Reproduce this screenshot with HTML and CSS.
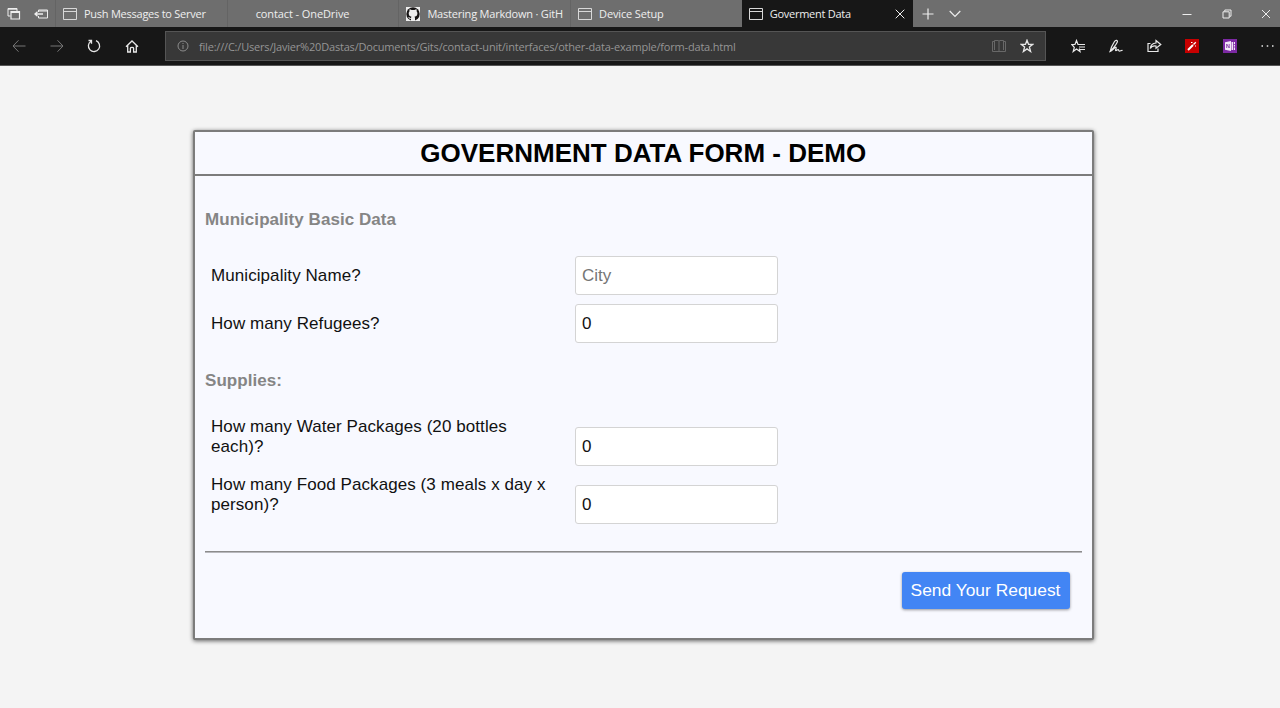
FILE: index.html
```html
<!DOCTYPE html>
<html lang="en">
<head>
<meta charset="utf-8">
<title>Goverment Data</title>
<link rel="stylesheet" href="styles.css">
</head>
<body>
<svg class="defs" width="0" height="0" aria-hidden="true">
  <symbol id="page" viewBox="0 0 14 12"><path d="M.5.5h13v11H.5zM.5 3.5h13" fill="none" stroke="currentColor"/></symbol>
</svg>
<header class="tabs">
  <div class="tab-tools">
    <svg width="14" height="14" viewBox="0 0 14 14" fill="none" stroke="currentColor"><path d="M3.500 9H1V1.500h9V4M1 2.200h9"/><path d="M4 4.500h8.500V12H4zM4 5.500h8.500" stroke-width="1.200"/></svg>
    <svg width="14" height="10" viewBox="0 0 14 10" fill="none" stroke="currentColor"><path d="M4.500 3V1h9v8h-9V7M4.500 2h9"/><path d="M1 5h8M3.500 2.800L1 5l2.500 2.200" stroke-width="1.300"/></svg>
  </div>
  <div class="tab"><svg class="fav" width="14" height="12"><use href="#page"/></svg><span class="t1">Push Messages to Server</span></div>
  <div class="tab plain"><span class="t2">contact - OneDrive</span></div>
  <div class="tab git"><svg class="fav" width="14" height="14" viewBox="0 0 14 14"><path fill="#eee" d="M0 0h14v14H0z"/><circle cx="7" cy="7" r="6.700" fill="#171515"/><path fill="#eee" d="M5 14v-2.200c-2 .4-2-1.200-3-1.400 1.500-.4 1.800 1 3 .5.100-.6.300-.9.500-1.100C3.500 9.500 2.700 8.300 2.700 6.300c0-.8.300-1.500.8-2-.2-.7-.1-1.400.1-2 .8 0 1.500.4 2 .8a7 7 0 0 1 2.900 0c.6-.4 1.200-.8 2-.8.200.6.300 1.300.1 2 .5.500.8 1.200.8 2 0 2-.9 3.200-2.900 3.500.4.400.5.900.5 1.500V14z"/></svg><span class="t3">Mastering Markdown · GitH</span></div>
  <div class="tab"><svg class="fav" width="14" height="12"><use href="#page"/></svg><span class="t4">Device Setup</span></div>
  <div class="tab active"><svg class="fav" width="14" height="12"><use href="#page"/></svg><span class="t5">Goverment Data</span><svg class="close" width="10" height="10" viewBox="0 0 10 10"><path d="M.7.7l8.600 8.600M9.300.7L.7 9.300" stroke="currentColor"/></svg></div>
  <div class="tab-actions">
    <svg width="12" height="12" viewBox="0 0 12 12"><path d="M6 .5v11M.5 6h11" stroke="currentColor" stroke-width="1.200"/></svg>
    <svg width="12" height="8" viewBox="0 0 12 8"><path d="M.7 1L6 6.300 11.300 1" fill="none" stroke="currentColor" stroke-width="1.200"/></svg>
  </div>
  <div class="window-actions">
    <svg width="10" height="10" viewBox="0 0 10 10"><path d="M.5 5.500h9" stroke="currentColor"/></svg>
    <svg width="10" height="10" viewBox="0 0 10 10" fill="none" stroke="currentColor"><path d="M1 2.800h6.200V9H1zM2.800 2.500V1H9v6.200H7.500"/></svg>
    <svg width="10" height="10" viewBox="0 0 10 10"><path d="M1 1l8 8M9 1L1 9" stroke="currentColor"/></svg>
  </div>
</header>
<nav class="toolbar">
  <div class="nav-buttons">
    <svg class="dim" width="14" height="14" viewBox="0 0 14 14"><path d="M13.500 7H1M6.500 1.300L1 7l5.500 5.700"/></svg>
    <svg class="dim" width="14" height="14" viewBox="0 0 14 14"><path d="M.5 7H13M7.500 1.300L13 7l-5.500 5.700"/></svg>
    <svg width="14" height="14" viewBox="0 0 14 14"><path d="M9 1.700A5.600 5.600 0 1 1 4 2.200M1.500 1.500h3V4.700" stroke-width="1.300"/></svg>
    <svg width="14" height="14" viewBox="0 0 14 14"><path d="M1 7.800l6-5.800 6 5.800M2.700 6.500V13h2.700V9.200c0-1 3.200-1 3.200 0V13h2.700V6.500" stroke-width="1.300"/></svg>
  </div>
  <div class="address">
    <svg class="info" width="12" height="12" viewBox="0 0 12 12"><circle cx="6" cy="6" r="5"/><path d="M6 5v4M6 3v1"/></svg>
    <span class="url">file:///C:/Users/Javier%20Dastas/Documents/Gits/contact-unit/interfaces/other-data-example/form-data.html</span>
    <svg class="book" width="14" height="14" viewBox="0 0 14 14"><path d="M.5 2.500h2v-1H6q1 0 1 1 0-1 1-1h3.500v1h2v10H.5zM7 2.500v10M2.500 2v9M11.500 2v9"/></svg>
    <svg class="star" width="14" height="14" viewBox="0 0 14 14"><path d="M7 1.200l1.500 4.100h4.300L9.400 8l1.200 4.500L7 9.900l-3.600 2.600L4.600 8 1.200 5.300h4.300z" stroke-width="1.300"/></svg>
  </div>
  <div class="toolbar-actions">
    <svg width="15" height="14" viewBox="0 0 15 14"><path d="M8.300 9.500L9 12.500 5.500 10 2.200 12.500 3.300 8.300.8 5.500H4L5.500 1.500 7 5.500h7M8 8h6M9 10.500h5" stroke-width="1.200"/></svg>
    <svg width="15" height="14" viewBox="0 0 15 14"><path d="M1.200 12.500L2.500 8 5.500 2.500c1.200-2 3.700-1.300 2.700.8C7 6 3.500 10 1.200 12.500c2-.5 4.700-4.700 5.800-4.300 1 .5-1.300 3.300-.1 3.400 1 0 1.600-1.300 2.300-1 .7.400.2 1.400 1.200 1.500 1.200 0 2-1.200 3.200-.6" stroke-width="1.200"/></svg>
    <svg width="15" height="14" viewBox="0 0 15 14"><path d="M3.500 4.500H1v8h10V9.500M9 1.500L13.800 5.500 9 9.300V7Q5 6.500 3.300 9.500 3.700 4.500 9 4z" stroke-width="1.200"/></svg>
    <svg width="14" height="14" viewBox="0 0 14 14"><path fill="#c70000" stroke="none" d="M0 0h14v14H0z"/><path d="M3 11l5-5" stroke="#fff" stroke-width="1.900"/><path d="M8.500 5.500L10.800 3.200" stroke="#fff" stroke-width="1.300"/><path d="M6 3.500h1.500M10.500 6.500v1" stroke="#fff"/></svg>
    <svg class="note" width="14" height="14" viewBox="0 0 14 14"><path fill="#7c29a3" stroke="none" d="M0 0h14v14H0z"/><path fill="#f2e8f6" stroke="none" d="M2 3.200L8 2v10l-6-1.200zM8.500 3H12v8H8.500z"/><path d="M3.700 9V5l2.500 4V5M10.500 3v8M10.500 5.500H12M10.500 8H12" stroke="#7c29a3" stroke-width=".8"/></svg>
    <svg width="13" height="4" viewBox="0 0 13 4"><path d="M.5 2h1.500M5.750 2h1.500M11 2h1.500" stroke-width="1.500"/></svg>
  </div>
</nav>
<main>
  <form class="panel">
    <h1><span>GOVERNMENT DATA FORM - DEMO</span></h1>
    <div class="content">
      <h2>Municipality Basic Data</h2>
      <div class="row"><label for="city">Municipality Name?</label><input id="city" placeholder="City"></div>
      <div class="row"><label for="refugees">How many Refugees?</label><input id="refugees" value="0"></div>
      <h2 class="supplies">Supplies:</h2>
      <div class="row tall"><label for="water">How many Water Packages (20 bottles each)?</label><input id="water" value="0"></div>
      <div class="row tall"><label for="food">How many Food Packages (3 meals x day x person)?</label><input id="food" value="0"></div>
      <div class="footer"><button type="button">Send Your Request</button></div>
    </div>
  </form>
</main>
</body>
</html>
```
FILE: styles.css
```css
* { box-sizing: border-box; }
body { margin: 0; height: 708px; overflow: hidden; background: #f4f4f4; font-family: "Liberation Sans", Arial, sans-serif; }
svg { display: block; flex: none; }
.defs { position: absolute; }
.tabs, .toolbar { display: flex; font-family: "Open Sans", "Noto Sans", sans-serif; font-size: 11px; color: #eee; white-space: nowrap; }
.tabs { height: 27px; background: #6e6e6e; }
.tab-tools { width: 55px; display: flex; align-items: center; gap: 13px; padding-left: 7px; }
.tab { width: 171.700px; display: flex; align-items: center; gap: 7px; padding-left: 7px; border-left: 1px solid #646464; line-height: 27px; overflow: hidden; }
.tab .fav { color: #d8d8d8; }
.t1 { letter-spacing: -.25px; }
.t2 { letter-spacing: -.1px; }
.t3 { letter-spacing: -.2px; }
.t4 { letter-spacing: -.15px; }
.t5 { letter-spacing: -.27px; }
.plain { padding-left: 28px; }
.active { background: #171717; border-color: #171717; padding-left: 6px; }
.close { margin-left: auto; margin-right: 8.500px; }
.tab-actions { display: flex; align-items: center; gap: 15px; padding-left: 9px; }
.window-actions { display: flex; align-items: center; gap: 29.500px; margin-left: auto; padding-right: 9px; }
.toolbar { height: 39px; background: #171717; border-bottom: 1px solid #555; align-items: center; }
.toolbar svg { fill: none; stroke: #e8e8e8; }
.nav-buttons { width: 165px; display: flex; gap: 23.500px; padding-left: 12px; }
.toolbar .dim { stroke: #777; }
.address { width: 881px; height: 30px; display: flex; align-items: center; padding: 0 11px; background: #383838; border: 1px solid #555; color: #959595; }
.url { letter-spacing: -.192px; }
.toolbar .info { stroke: #8c8c8c; margin-right: 10px; }
.toolbar .book { stroke: #686868; margin-left: auto; margin-right: 14px; }
.toolbar-actions { flex: 1; display: flex; align-items: center; gap: 23px; padding-left: 25px; }
.note { margin-left: 1px; margin-right: 1px; }
main { padding: 64px 0 0 193px; }
.panel { width: 900.500px; height: 510px; background: #f8f9ff; border: 2px solid #7c7c7c; box-shadow: 0 1px 4px rgba(0,0,0,.6); border-radius: 2px; }
h1 { height: 44px; margin: 0; border-bottom: 2px solid #7c7c7c; text-align: center; font-size: 26px; line-height: 42px; color: #000; }
.content { padding: 34px 10px 0; font-size: 17px; line-height: 20px; letter-spacing: .075px; color: #111; }
h2 { margin: 0 0 26px; font-size: 17px; line-height: 20px; letter-spacing: .05px; color: #858585; }
.row { display: flex; align-items: center; height: 39px; margin-bottom: 9px; padding-left: 6px; }
.row label { width: 364px; padding-right: 20px; }
.row.tall { height: 49px; align-items: flex-start; }
.row.tall input { align-self: flex-end; }
input { width: 203px; height: 39px; padding: 0 6px; border: 1px solid #d4d4d4; border-radius: 3px; background: #fff; font: 17px "Liberation Sans", Arial, sans-serif; color: #111; }
input::placeholder { color: #757575; }
.supplies { margin-top: 28px; margin-bottom: 26px; }
.footer { display: flex; justify-content: flex-end; margin-top: 27px; padding: 20px 12px 0; border-top: 1px solid #8c8c8c; box-shadow: inset 0 1px 0 #b8b8bd; }
button { width: 168px; height: 37px; padding: 0; border: 0; border-radius: 3px; background: #4285f4; color: #fff; font: 17.400px "Liberation Sans", Arial, sans-serif; letter-spacing: 0; box-shadow: 0 1px 3px rgba(0,0,0,.4); white-space: nowrap; }
```
